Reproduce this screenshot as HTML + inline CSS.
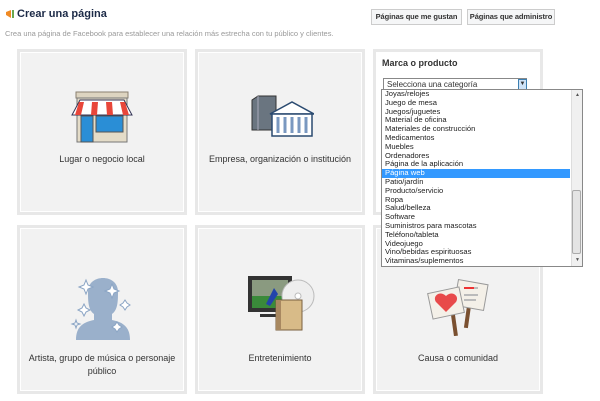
<!DOCTYPE html>
<html><head><meta charset="utf-8"><style>
*{margin:0;padding:0;box-sizing:border-box}
body{width:600px;height:401px;background:#fff;font-family:"Liberation Sans",Arial,sans-serif;position:relative;overflow:hidden;color:#333}
.a{position:absolute}
.card{position:absolute;background:#f2f2f2;border:3px solid #e8e8e8;box-shadow:inset 0 0 0 1px #fff}
.lbl{position:absolute;left:0;right:0;text-align:center;font-size:9px;color:#333;line-height:13px}
.btn{position:absolute;top:9px;height:16px;border:1px solid #ccc;background:#f5f6f7;font-size:7.5px;font-weight:bold;color:#333;text-align:center;line-height:14px;white-space:nowrap;letter-spacing:-0.1px}
.list{position:absolute;left:381px;top:89px;width:202px;height:178px;border:1px solid #888;background:#fff;font-size:7.6px;line-height:8.8px;color:#222}
.list div{padding-left:3px;height:8.8px;white-space:nowrap}
.list .sel{background:#3399ff;color:#fff}
</style></head><body>
<svg class="a" style="left:5px;top:9px" width="10" height="10" viewBox="0 0 10 10"><path d="M1 3 L6 1 L6 9 L1 6Z" fill="#f08a24"/><rect x="7" y="1" width="2" height="8" fill="#6aa84f"/></svg>
<div class="a" style="left:17px;top:8px;font-size:11px;font-weight:bold;color:#1c2a47">Crear una página</div>
<div class="a" style="left:5px;top:29px;font-size:7.5px;color:#999">Crea una página de Facebook para establecer una relación más estrecha con tu público y clientes.</div>
<div class="btn" style="left:371px;width:91px">Páginas que me gustan</div>
<div class="btn" style="left:467px;width:88px">Páginas que administro</div>

<div class="card" style="left:17px;top:49px;width:170px;height:166px">
<svg class="a" style="left:50px;top:38px" width="64" height="54" viewBox="0 0 64 54">
<rect x="6" y="2" width="52" height="6" fill="#ddd4c0" stroke="#8a8070"/>
<rect x="7" y="8" width="50" height="44" fill="#e4dcc8" stroke="#777"/>
<rect x="11" y="26" width="12" height="26" fill="#2a8ed6" stroke="#555"/>
<rect x="26" y="26" width="27" height="16" fill="#2a8ed6" stroke="#555"/>
<path d="M2 25 L10 10 L54 10 L62 25Z" fill="#fff" stroke="#335"/>
<path d="M9 12 L14 12 L11 25 L5 25Z M22 12 L28 12 L27 25 L21 25Z M36 12 L42 12 L43 25 L37 25Z M50 12 L55 12 L59 25 L53 25Z" fill="#e8463a"/>
</svg>
<div class="lbl" style="top:101px">Lugar o negocio local</div>
</div>

<div class="card" style="left:195px;top:49px;width:170px;height:166px">
<svg class="a" style="left:50px;top:38px" width="66" height="50" viewBox="0 0 66 50">
<path d="M4 40 L4 10 L10 6 L28 6 L28 40Z" fill="#6a7580" stroke="#333"/>
<path d="M10 6 L10 40" stroke="#aab" />
<path d="M22 24 L44 12 L66 24Z" fill="#fff" stroke="#2a4a70" stroke-width="1.5"/>
<rect x="24" y="24" width="40" height="22" fill="#fff" stroke="#2a4a70" stroke-width="1.5"/>
<path d="M30 27v16M37 27v16M44 27v16M51 27v16M58 27v16" stroke="#7a98c0" stroke-width="3"/>
</svg>
<div class="lbl" style="top:101px">Empresa, organización o institución</div>
</div>

<div class="card" style="left:373px;top:49px;width:170px;height:166px;background:#fff">
<div class="a" style="left:6px;top:6px;font-size:9px;font-weight:bold;color:#333">Marca o producto</div>
<div class="a" style="left:7px;top:26px;width:144px;height:13px;border:1px solid #888;background:#fff;font-size:8px;line-height:11px;padding-left:3px">Selecciona una categoría</div>
<div class="a" style="left:142px;top:27px;width:9px;height:11px;background:#cfe3f7;border:1px solid #3c7fb1;font-size:6px;text-align:center;line-height:9px">▼</div>
</div>

<div class="card" style="left:17px;top:225px;width:170px;height:169px">
<svg class="a" style="left:50px;top:43px" width="66" height="74" viewBox="0 0 66 64">
<path d="M6 64 C6 50 14 46 24 44 L24 38 C18 34 18 24 18 16 C18 6 26 2 33 2 C40 2 48 6 48 16 C48 24 48 34 42 38 L42 44 C52 46 60 50 60 64Z" fill="#9ab0cb"/>
<g fill="#fff" stroke="#8aa4c4" stroke-width="1"><path d="M16 4l2 5 5 2-5 2-2 5-2-5-5-2 5-2z"/><path d="M42 8l2 5 5 2-5 2-2 5-2-5-5-2 5-2z"/><path d="M14 28l2 4 4 2-4 2-2 4-2-4-4-2 4-2z"/><path d="M55 24l2 3 3 2-3 2-2 3-2-3-3-2 3-2z"/><path d="M6 44l1 3 3 1-3 1-1 3-1-3-3-1 3-1z"/><path d="M47 46l2 3 3 2-3 2-2 3-2-3-3-2 3-2z"/></g>
</svg>
<div class="lbl" style="top:124px">Artista, grupo de música o personaje<br>público</div>
</div>

<div class="card" style="left:195px;top:225px;width:170px;height:169px">
<svg class="a" style="left:50px;top:46px" width="68" height="58" viewBox="0 0 68 58">
<rect x="0" y="2" width="44" height="36" fill="#333"/>
<rect x="4" y="6" width="36" height="28" fill="#8a9a80"/>
<rect x="4" y="22" width="36" height="12" fill="#3a8a3a"/>
<path d="M18 30 L26 14 L30 20 L22 32Z" fill="#2244aa"/>
<rect x="12" y="40" width="20" height="3" fill="#333"/>
<circle cx="50" cy="22" r="16" fill="#eee" stroke="#bbb"/>
<circle cx="50" cy="22" r="3" fill="#fff" stroke="#bbb"/>
<rect x="28" y="26" width="26" height="30" fill="#d8bb88" stroke="#7a6040"/>
<rect x="28" y="26" width="5" height="30" fill="#a88860"/>
</svg>
<div class="lbl" style="top:124px">Entretenimiento</div>
</div>

<div class="card" style="left:373px;top:225px;width:170px;height:169px">
<svg class="a" style="left:50px;top:50px" width="64" height="58" viewBox="0 0 64 58">
<rect x="40" y="20" width="4" height="30" fill="#7a5030" transform="rotate(8 42 35)"/>
<rect x="26" y="30" width="4" height="28" fill="#7a5030" transform="rotate(-8 28 44)"/>
<rect x="30" y="4" width="30" height="26" fill="#f4f0e8" stroke="#999" transform="rotate(10 45 17)"/>
<path d="M38 10h14M38 17h14M38 22h12" stroke="#bbb" stroke-width="2"/>
<path d="M38 10h10" stroke="#e33" stroke-width="2"/>
<rect x="4" y="12" width="32" height="26" fill="#f4f0e8" stroke="#999" transform="rotate(-12 20 25)"/>
<path d="M20 34 L10 24 C6 18 14 12 20 18 C26 12 34 18 30 24Z" fill="#e84a4a"/>
</svg>
<div class="lbl" style="top:124px">Causa o comunidad</div>
</div>

<div class="list">
<div>Joyas/relojes</div><div>Juego de mesa</div><div>Juegos/juguetes</div><div>Material de oficina</div><div>Materiales de construcción</div><div>Medicamentos</div><div>Muebles</div><div>Ordenadores</div><div>Página de la aplicación</div><div class="sel" style="margin-right:12px">Página web</div><div>Patio/jardín</div><div>Producto/servicio</div><div>Ropa</div><div>Salud/belleza</div><div>Software</div><div>Suministros para mascotas</div><div>Teléfono/tableta</div><div>Videojuego</div><div>Vino/bebidas espirituosas</div><div>Vitaminas/suplementos</div>
<div class="a" style="right:0;top:0;width:11px;height:176px;background:#f0f0f0;border-left:1px solid #ddd"></div>
<div class="a" style="right:1px;top:100px;width:9px;height:64px;background:#e4e4e4;border:1px solid #aaa;border-radius:2px"></div>
<div class="a" style="right:2px;top:1px;font-size:5px;color:#555">▲</div>
<div class="a" style="right:2px;bottom:1px;font-size:5px;color:#555">▼</div>
</div>
</body></html>
